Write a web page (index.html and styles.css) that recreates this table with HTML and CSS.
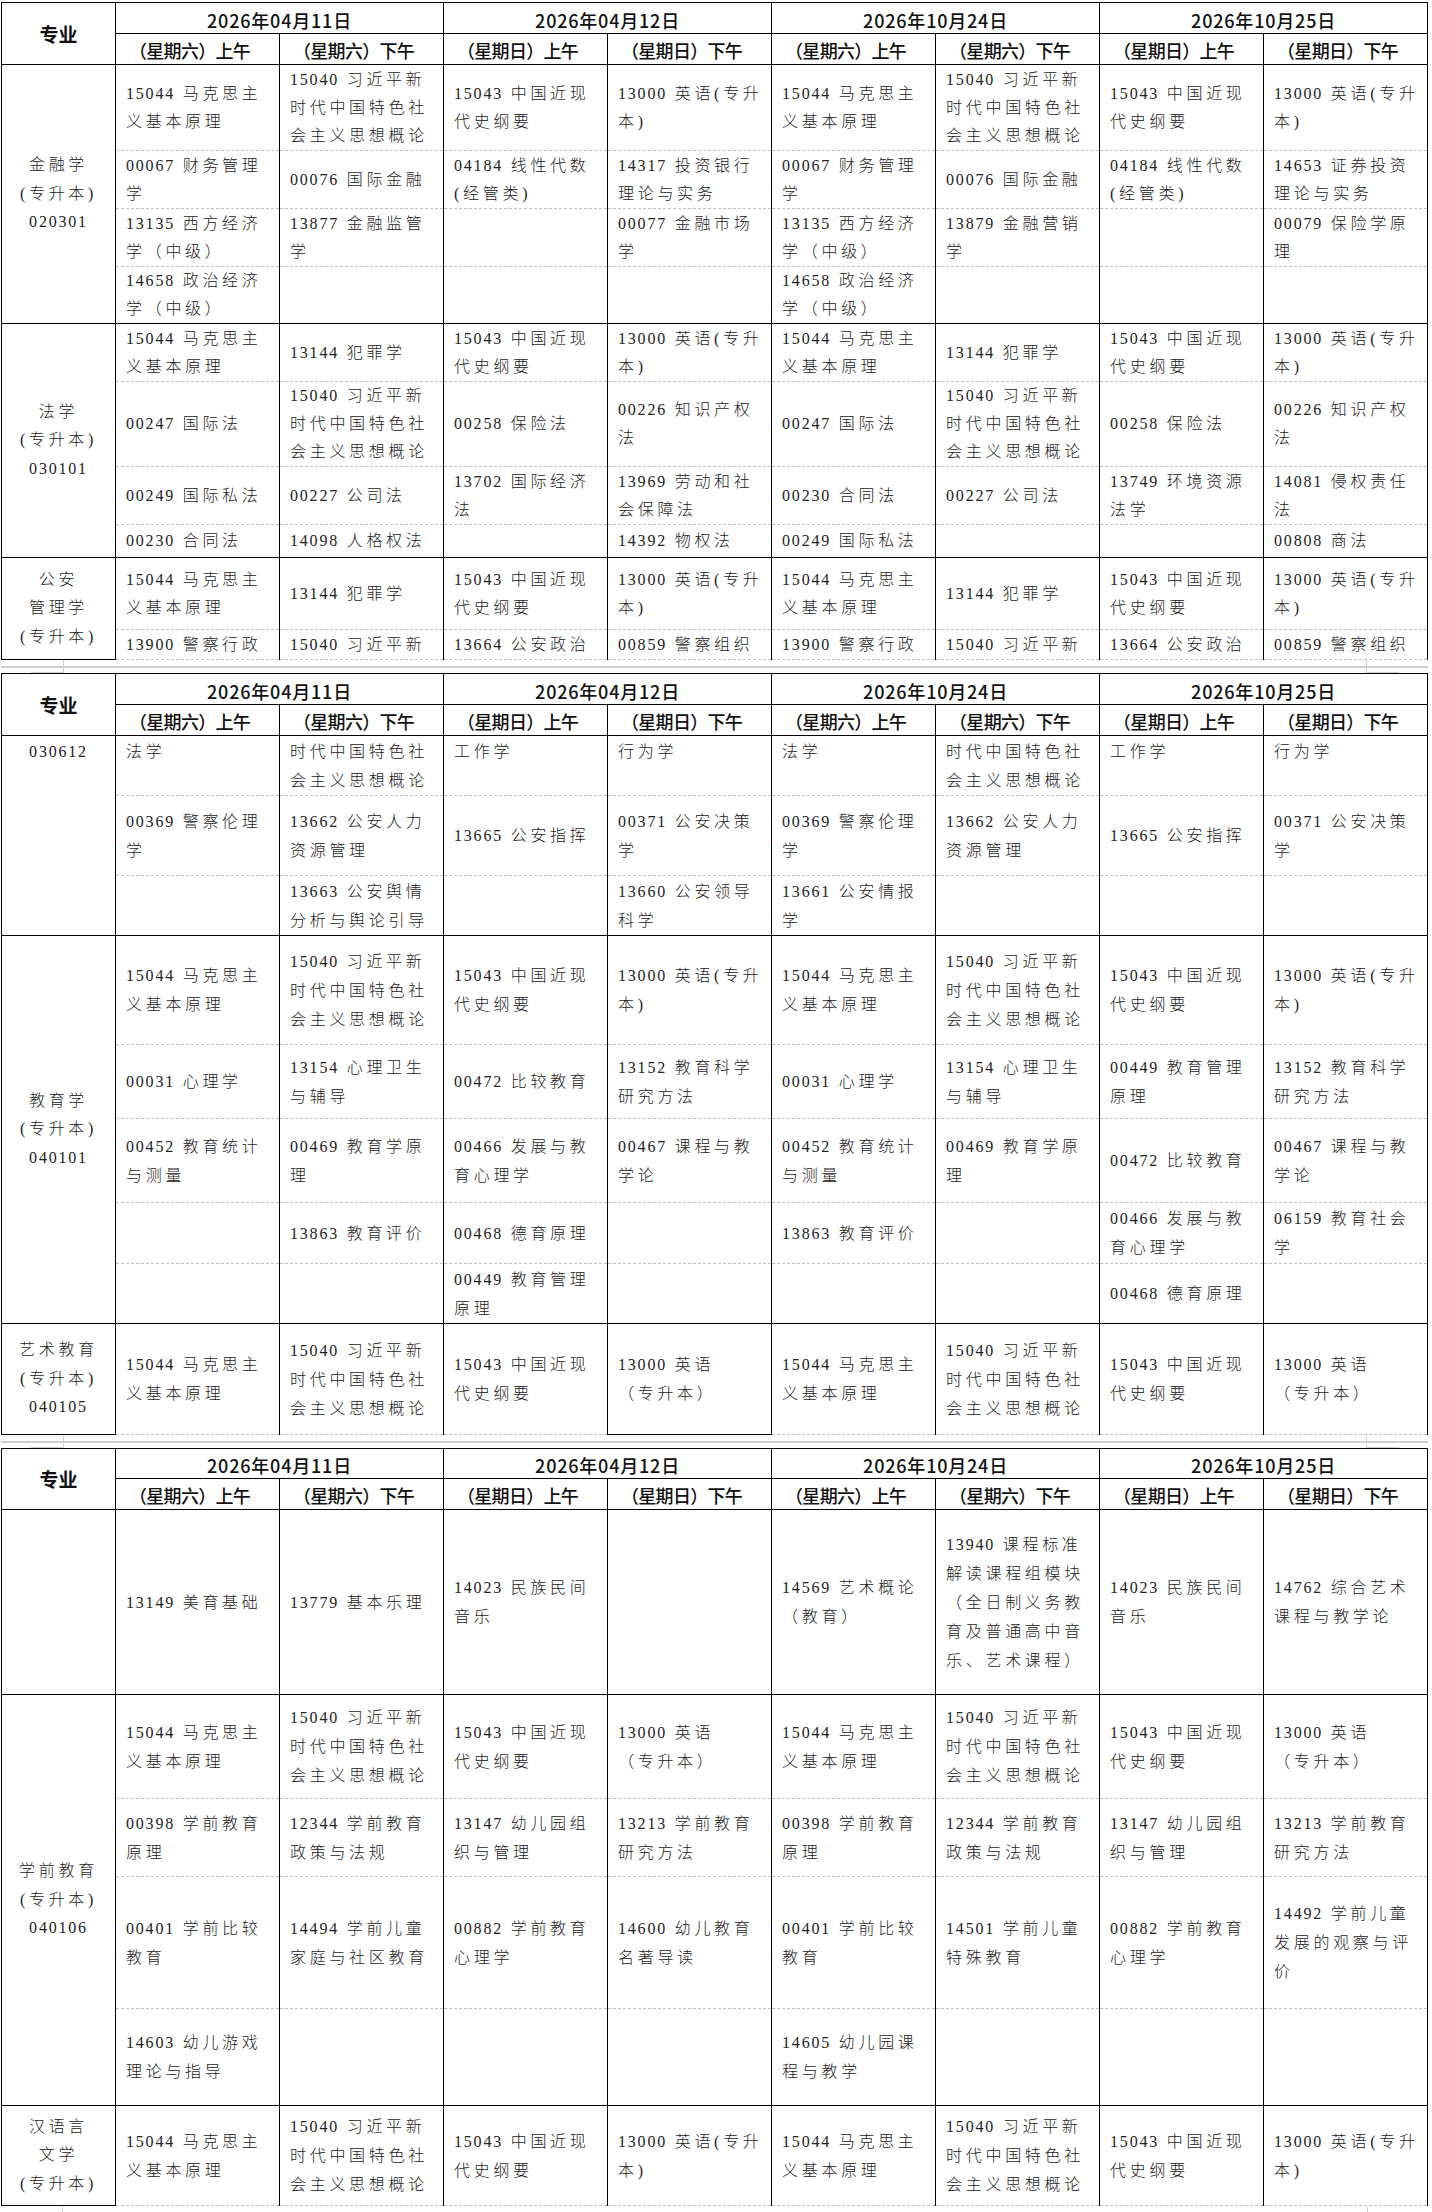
FILE: index.html
```html
<!DOCTYPE html>
<html lang="zh-CN">
<head>
<meta charset="utf-8">
<title>考试课程安排</title>
<link rel="stylesheet" href="styles.css">
</head>
<body>
<div class="page">

<table class="sheet">
<colgroup><col class="c-major"><col class="c-slot" span="8"></colgroup>
<thead>
<tr class="h31"><th class="major" rowspan="2">专业</th><th class="date" colspan="2">2026年04月11日</th><th class="date" colspan="2">2026年04月12日</th><th class="date" colspan="2">2026年10月24日</th><th class="date" colspan="2">2026年10月25日</th></tr>
<tr class="h31"><th class="slot">（星期六）上午</th><th class="slot">（星期六）下午</th><th class="slot">（星期日）上午</th><th class="slot">（星期日）下午</th><th class="slot">（星期六）上午</th><th class="slot">（星期六）下午</th><th class="slot">（星期日）上午</th><th class="slot">（星期日）下午</th></tr>
</thead>
<tbody>
<tr class="blk h86"><td class="lab" rowspan="4">金融学<br>(专升本)<br><span class="c">020301</span></td>
<td><span class="c">15044</span> 马克思主<br>义基本原理</td><td><span class="c">15040</span> 习近平新<br>时代中国特色社<br>会主义思想概论</td><td><span class="c">15043</span> 中国近现<br>代史纲要</td><td><span class="c">13000</span> 英语(专升<br>本)</td>
<td><span class="c">15044</span> 马克思主<br>义基本原理</td><td><span class="c">15040</span> 习近平新<br>时代中国特色社<br>会主义思想概论</td><td><span class="c">15043</span> 中国近现<br>代史纲要</td><td><span class="c">13000</span> 英语(专升<br>本)</td></tr>
<tr class="h58"><td><span class="c">00067</span> 财务管理<br>学</td><td><span class="c">00076</span> 国际金融</td><td><span class="c">04184</span> 线性代数<br>(经管类)</td><td><span class="c">14317</span> 投资银行<br>理论与实务</td>
<td><span class="c">00067</span> 财务管理<br>学</td><td><span class="c">00076</span> 国际金融</td><td><span class="c">04184</span> 线性代数<br>(经管类)</td><td><span class="c">14653</span> 证券投资<br>理论与实务</td></tr>
<tr class="h58"><td><span class="c">13135</span> 西方经济<br>学（中级）</td><td><span class="c">13877</span> 金融监管<br>学</td><td></td><td><span class="c">00077</span> 金融市场<br>学</td>
<td><span class="c">13135</span> 西方经济<br>学（中级）</td><td><span class="c">13879</span> 金融营销<br>学</td><td></td><td><span class="c">00079</span> 保险学原<br>理</td></tr>
<tr class="h57"><td><span class="c">14658</span> 政治经济<br>学（中级）</td><td></td><td></td><td></td>
<td><span class="c">14658</span> 政治经济<br>学（中级）</td><td></td><td></td><td></td></tr>

<tr class="blk h58"><td class="lab" rowspan="4">法学<br>(专升本)<br><span class="c">030101</span></td>
<td><span class="c">15044</span> 马克思主<br>义基本原理</td><td><span class="c">13144</span> 犯罪学</td><td><span class="c">15043</span> 中国近现<br>代史纲要</td><td><span class="c">13000</span> 英语(专升<br>本)</td>
<td><span class="c">15044</span> 马克思主<br>义基本原理</td><td><span class="c">13144</span> 犯罪学</td><td><span class="c">15043</span> 中国近现<br>代史纲要</td><td><span class="c">13000</span> 英语(专升<br>本)</td></tr>
<tr class="h85"><td><span class="c">00247</span> 国际法</td><td><span class="c">15040</span> 习近平新<br>时代中国特色社<br>会主义思想概论</td><td><span class="c">00258</span> 保险法</td><td><span class="c">00226</span> 知识产权<br>法</td>
<td><span class="c">00247</span> 国际法</td><td><span class="c">15040</span> 习近平新<br>时代中国特色社<br>会主义思想概论</td><td><span class="c">00258</span> 保险法</td><td><span class="c">00226</span> 知识产权<br>法</td></tr>
<tr class="h58"><td><span class="c">00249</span> 国际私法</td><td><span class="c">00227</span> 公司法</td><td><span class="c">13702</span> 国际经济<br>法</td><td><span class="c">13969</span> 劳动和社<br>会保障法</td>
<td><span class="c">00230</span> 合同法</td><td><span class="c">00227</span> 公司法</td><td><span class="c">13749</span> 环境资源<br>法学</td><td><span class="c">14081</span> 侵权责任<br>法</td></tr>
<tr class="h33"><td><span class="c">00230</span> 合同法</td><td><span class="c">14098</span> 人格权法</td><td></td><td><span class="c">14392</span> 物权法</td>
<td><span class="c">00249</span> 国际私法</td><td></td><td></td><td><span class="c">00808</span> 商法</td></tr>

<tr class="blk h72"><td class="lab end" rowspan="2">公安<br>管理学<br>(专升本)</td>
<td><span class="c">15044</span> 马克思主<br>义基本原理</td><td><span class="c">13144</span> 犯罪学</td><td><span class="c">15043</span> 中国近现<br>代史纲要</td><td><span class="c">13000</span> 英语(专升<br>本)</td>
<td><span class="c">15044</span> 马克思主<br>义基本原理</td><td><span class="c">13144</span> 犯罪学</td><td><span class="c">15043</span> 中国近现<br>代史纲要</td><td><span class="c">13000</span> 英语(专升<br>本)</td></tr>
<tr class="h30 cut"><td><span class="c">13900</span> 警察行政</td><td><span class="c">15040</span> 习近平新</td><td><span class="c">13664</span> 公安政治</td><td><span class="c">00859</span> 警察组织</td>
<td><span class="c">13900</span> 警察行政</td><td><span class="c">15040</span> 习近平新</td><td><span class="c">13664</span> 公安政治</td><td><span class="c">00859</span> 警察组织</td></tr>
</tbody>
</table>

<div class="gap"><div class="rule"></div><i class="mark mark-l"></i><i class="mark mark-r"></i></div>

<table class="sheet loose">
<colgroup><col class="c-major"><col class="c-slot" span="8"></colgroup>
<thead>
<tr class="h31"><th class="major" rowspan="2">专业</th><th class="date" colspan="2">2026年04月11日</th><th class="date" colspan="2">2026年04月12日</th><th class="date" colspan="2">2026年10月24日</th><th class="date" colspan="2">2026年10月25日</th></tr>
<tr class="h31"><th class="slot">（星期六）上午</th><th class="slot">（星期六）下午</th><th class="slot">（星期日）上午</th><th class="slot">（星期日）下午</th><th class="slot">（星期六）上午</th><th class="slot">（星期六）下午</th><th class="slot">（星期日）上午</th><th class="slot">（星期日）下午</th></tr>
</thead>
<tbody>
<tr class="blk h60 cont"><td class="lab" rowspan="3"><span class="c">030612</span></td>
<td>法学</td><td>时代中国特色社<br>会主义思想概论</td><td>工作学</td><td>行为学</td>
<td>法学</td><td>时代中国特色社<br>会主义思想概论</td><td>工作学</td><td>行为学</td></tr>
<tr class="h80"><td><span class="c">00369</span> 警察伦理<br>学</td><td><span class="c">13662</span> 公安人力<br>资源管理</td><td><span class="c">13665</span> 公安指挥</td><td><span class="c">00371</span> 公安决策<br>学</td>
<td><span class="c">00369</span> 警察伦理<br>学</td><td><span class="c">13662</span> 公安人力<br>资源管理</td><td><span class="c">13665</span> 公安指挥</td><td><span class="c">00371</span> 公安决策<br>学</td></tr>
<tr class="h60"><td></td><td><span class="c">13663</span> 公安舆情<br>分析与舆论引导</td><td></td><td><span class="c">13660</span> 公安领导<br>科学</td>
<td><span class="c">13661</span> 公安情报<br>学</td><td></td><td></td><td></td></tr>

<tr class="blk h109"><td class="lab" rowspan="5">教育学<br>(专升本)<br><span class="c">040101</span></td>
<td><span class="c">15044</span> 马克思主<br>义基本原理</td><td><span class="c">15040</span> 习近平新<br>时代中国特色社<br>会主义思想概论</td><td><span class="c">15043</span> 中国近现<br>代史纲要</td><td><span class="c">13000</span> 英语(专升<br>本)</td>
<td><span class="c">15044</span> 马克思主<br>义基本原理</td><td><span class="c">15040</span> 习近平新<br>时代中国特色社<br>会主义思想概论</td><td><span class="c">15043</span> 中国近现<br>代史纲要</td><td><span class="c">13000</span> 英语(专升<br>本)</td></tr>
<tr class="h74"><td><span class="c">00031</span> 心理学</td><td><span class="c">13154</span> 心理卫生<br>与辅导</td><td><span class="c">00472</span> 比较教育</td><td><span class="c">13152</span> 教育科学<br>研究方法</td>
<td><span class="c">00031</span> 心理学</td><td><span class="c">13154</span> 心理卫生<br>与辅导</td><td><span class="c">00449</span> 教育管理<br>原理</td><td><span class="c">13152</span> 教育科学<br>研究方法</td></tr>
<tr class="h84"><td><span class="c">00452</span> 教育统计<br>与测量</td><td><span class="c">00469</span> 教育学原<br>理</td><td><span class="c">00466</span> 发展与教<br>育心理学</td><td><span class="c">00467</span> 课程与教<br>学论</td>
<td><span class="c">00452</span> 教育统计<br>与测量</td><td><span class="c">00469</span> 教育学原<br>理</td><td><span class="c">00472</span> 比较教育</td><td><span class="c">00467</span> 课程与教<br>学论</td></tr>
<tr class="h61"><td></td><td><span class="c">13863</span> 教育评价</td><td><span class="c">00468</span> 德育原理</td><td></td>
<td><span class="c">13863</span> 教育评价</td><td></td><td><span class="c">00466</span> 发展与教<br>育心理学</td><td><span class="c">06159</span> 教育社会<br>学</td></tr>
<tr class="h60"><td></td><td></td><td><span class="c">00449</span> 教育管理<br>原理</td><td></td>
<td></td><td></td><td><span class="c">00468</span> 德育原理</td><td></td></tr>

<tr class="blk h111 last"><td class="lab end">艺术教育<br>(专升本)<br><span class="c">040105</span></td>
<td><span class="c">15044</span> 马克思主<br>义基本原理</td><td><span class="c">15040</span> 习近平新<br>时代中国特色社<br>会主义思想概论</td><td><span class="c">15043</span> 中国近现<br>代史纲要</td><td class="end"><span class="c">13000</span> 英语<br>（专升本）</td>
<td><span class="c">15044</span> 马克思主<br>义基本原理</td><td><span class="c">15040</span> 习近平新<br>时代中国特色社<br>会主义思想概论</td><td><span class="c">15043</span> 中国近现<br>代史纲要</td><td><span class="c">13000</span> 英语<br>（专升本）</td></tr>
</tbody>
</table>

<div class="gap"><div class="rule"></div><i class="mark mark-l"></i><i class="mark mark-r"></i></div>

<table class="sheet loose">
<colgroup><col class="c-major"><col class="c-slot" span="8"></colgroup>
<thead>
<tr class="h30"><th class="major" rowspan="2">专业</th><th class="date" colspan="2">2026年04月11日</th><th class="date" colspan="2">2026年04月12日</th><th class="date" colspan="2">2026年10月24日</th><th class="date" colspan="2">2026年10月25日</th></tr>
<tr class="h31"><th class="slot">（星期六）上午</th><th class="slot">（星期六）下午</th><th class="slot">（星期日）上午</th><th class="slot">（星期日）下午</th><th class="slot">（星期六）上午</th><th class="slot">（星期六）下午</th><th class="slot">（星期日）上午</th><th class="slot">（星期日）下午</th></tr>
</thead>
<tbody>
<tr class="blk h185"><td class="lab"></td>
<td><span class="c">13149</span> 美育基础</td><td><span class="c">13779</span> 基本乐理</td><td><span class="c">14023</span> 民族民间<br>音乐</td><td></td>
<td><span class="c">14569</span> 艺术概论<br>（教育）</td><td><span class="c">13940</span> 课程标准<br>解读课程组模块<br>（全日制义务教<br>育及普通高中音<br>乐、艺术课程）</td><td><span class="c">14023</span> 民族民间<br>音乐</td><td><span class="c">14762</span> 综合艺术<br>课程与教学论</td></tr>

<tr class="blk h104"><td class="lab" rowspan="4">学前教育<br>(专升本)<br><span class="c">040106</span></td>
<td><span class="c">15044</span> 马克思主<br>义基本原理</td><td><span class="c">15040</span> 习近平新<br>时代中国特色社<br>会主义思想概论</td><td><span class="c">15043</span> 中国近现<br>代史纲要</td><td><span class="c">13000</span> 英语<br>（专升本）</td>
<td><span class="c">15044</span> 马克思主<br>义基本原理</td><td><span class="c">15040</span> 习近平新<br>时代中国特色社<br>会主义思想概论</td><td><span class="c">15043</span> 中国近现<br>代史纲要</td><td><span class="c">13000</span> 英语<br>（专升本）</td></tr>
<tr class="h78"><td><span class="c">00398</span> 学前教育<br>原理</td><td><span class="c">12344</span> 学前教育<br>政策与法规</td><td><span class="c">13147</span> 幼儿园组<br>织与管理</td><td><span class="c">13213</span> 学前教育<br>研究方法</td>
<td><span class="c">00398</span> 学前教育<br>原理</td><td><span class="c">12344</span> 学前教育<br>政策与法规</td><td><span class="c">13147</span> 幼儿园组<br>织与管理</td><td><span class="c">13213</span> 学前教育<br>研究方法</td></tr>
<tr class="h132"><td><span class="c">00401</span> 学前比较<br>教育</td><td><span class="c">14494</span> 学前儿童<br>家庭与社区教育</td><td><span class="c">00882</span> 学前教育<br>心理学</td><td><span class="c">14600</span> 幼儿教育<br>名著导读</td>
<td><span class="c">00401</span> 学前比较<br>教育</td><td><span class="c">14501</span> 学前儿童<br>特殊教育</td><td><span class="c">00882</span> 学前教育<br>心理学</td><td><span class="c">14492</span> 学前儿童<br>发展的观察与评<br>价</td></tr>
<tr class="h97"><td><span class="c">14603</span> 幼儿游戏<br>理论与指导</td><td></td><td></td><td></td>
<td><span class="c">14605</span> 幼儿园课<br>程与教学</td><td></td><td></td><td></td></tr>

<tr class="blk h100 last"><td class="lab end">汉语言<br>文学<br>(专升本)</td>
<td><span class="c">15044</span> 马克思主<br>义基本原理</td><td><span class="c">15040</span> 习近平新<br>时代中国特色社<br>会主义思想概论</td><td><span class="c">15043</span> 中国近现<br>代史纲要</td><td><span class="c">13000</span> 英语(专升<br>本)</td>
<td><span class="c">15044</span> 马克思主<br>义基本原理</td><td><span class="c">15040</span> 习近平新<br>时代中国特色社<br>会主义思想概论</td><td><span class="c">15043</span> 中国近现<br>代史纲要</td><td><span class="c">13000</span> 英语(专升<br>本)</td></tr>
</tbody>
</table>

<div class="tail"><i class="mark mark-l"></i><i class="mark mark-r"></i></div>

</div>
</body>
</html>
```

FILE: styles.css
```css
html, body {
  margin: 0;
  padding: 0;
  background: #ffffff;
}

body {
  color: #222;
  font-family: "Liberation Serif", "Noto Sans CJK SC", serif;
}

.page {
  width: 1432px;
  padding: 2px 0 0 1px;
  box-sizing: border-box;
}

.sheet {
  border-collapse: collapse;
  table-layout: fixed;
  width: 1426px;
}

.c-major { width: 114px; }
.c-slot { width: 164px; }

.sheet th {
  border: 1px solid #000;
  padding: 0;
  font-family: "Noto Sans CJK SC", sans-serif;
  font-weight: 500;
  font-size: 18px;
  line-height: 20px;
  color: #111;
  white-space: nowrap;
  overflow: hidden;
}

.sheet th.major {
  font-size: 19px;
  font-weight: 700;
  text-align: center;
}

.sheet th.date {
  text-align: center;
  padding-top: 3px;
  letter-spacing: 0.8px;
}

.sheet th.slot {
  text-align: left;
  padding: 2px 0 0 13px;
  letter-spacing: -0.7px;
}

.sheet td {
  border-left: 1px solid #000;
  border-right: 1px solid #000;
  border-top: 1px dashed #c2c2c2;
  border-bottom: 1px dashed #c2c2c2;
  padding: 0 0 0 10px;
  vertical-align: middle;
  font-size: 16px;
  font-weight: 300;
  line-height: 28px;
  letter-spacing: 3.7px;
  white-space: nowrap;
  overflow: hidden;
}

.sheet.loose td { line-height: 29px; }

.sheet td .c { letter-spacing: 1.8px; }

.sheet td.lab {
  border: 1px solid #000;
  padding: 0;
  text-align: center;
  line-height: 28.5px;
}

.sheet tr.blk > td { border-top: 1px solid #000; }

.sheet td.end { border-bottom: 1px solid #000; }

.sheet tr.cut > td,
.sheet tr.cont > td {
  vertical-align: top;
}
.sheet tr.cut > td { padding-top: 1px; line-height: 28px; }
.sheet tr.cont > td { padding-top: 2px; line-height: 28.5px; }

.h30 { height: 30px; }
.h31 { height: 31px; }
.h33 { height: 33px; }
.h57 { height: 57px; }
.h58 { height: 58px; }
.h60 { height: 60px; }
.h61 { height: 61px; }
.h72 { height: 72px; }
.h74 { height: 74px; }
.h78 { height: 78px; }
.h80 { height: 80px; }
.h84 { height: 84px; }
.h85 { height: 85px; }
.h86 { height: 86px; }
.h97 { height: 97px; }
.h100 { height: 100px; }
.h104 { height: 104px; }
.h109 { height: 109px; }
.h111 { height: 111px; }
.h132 { height: 132px; }
.h185 { height: 185px; }

.gap {
  position: relative;
  height: 13px;
  padding-top: 6px;
  box-sizing: border-box;
}

.gap .rule {
  width: 1427px;
  height: 2px;
  background: #cdcdcd;
}

.mark {
  position: absolute;
  display: block;
  border-color: #cfcfcf;
  border-style: solid;
  border-width: 0;
}

.gap .mark {
  top: 0;
  height: 12px;
  width: 32px;
  border-bottom-width: 1px;
}

.gap .mark-l {
  left: 30px;
  border-right-width: 1px;
}

.gap .mark-r {
  left: 1365px;
  border-left-width: 1px;
}

.tail {
  position: relative;
  height: 8px;
}

.tail .mark {
  top: 1px;
  height: 8px;
  width: 0;
}

.tail .mark-l { left: 61px; border-left-width: 1px; }
.tail .mark-r { left: 1366px; border-left-width: 1px; }
```
